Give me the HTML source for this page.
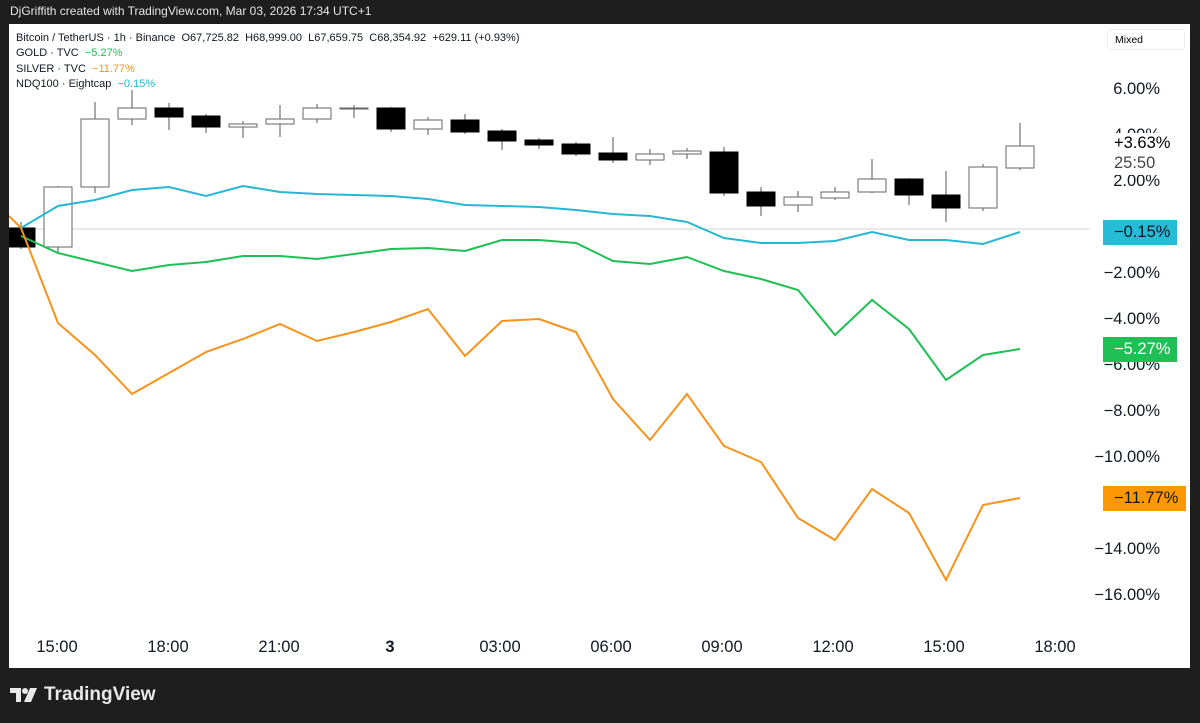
<!DOCTYPE html>
<html><head><meta charset="utf-8"><style>
html,body{margin:0;padding:0;background:#1e1e1e;width:1200px;height:723px;overflow:hidden;font-family:"Liberation Sans","DejaVu Sans",sans-serif}
#top{position:absolute;left:10px;top:4px;color:#e6e6e6;font-size:12px}
#panel{position:absolute;left:9px;top:24px;width:1181px;height:644px;background:#fff}
.leg{position:absolute;left:7px;font-size:11px;color:#131722;white-space:nowrap}
.ax{position:absolute;right:30px;font-size:16.5px;color:#131722;text-align:right}
.tl{position:absolute;top:614px;font-size:16.5px;color:#131722;transform:translateX(-50%)}
.badge{position:absolute;left:1094px;height:25px;font-size:16.5px;line-height:25px;padding:0 0 0 11px;box-sizing:border-box}
</style></head><body>
<div id="top">DjGriffith created with TradingView.com, Mar 03, 2026 17:34 UTC+1</div>
<div id="panel">
<svg width="1181" height="644" style="position:absolute;left:0;top:0" viewBox="9 24 1181 644">
<line x1="9" y1="229" x2="1090" y2="229" stroke="#d6d6d6" stroke-width="1"/>
<g id="candles"></g>
<polyline fill="none" stroke="#26b8d3" stroke-width="2" points="21,228 58,206 95,200 132,190 169,187 206,196 243,186 280,192 317,194 354,195 391,196 428,199 465,205 502,206 539,207 576,210 613,214 650,216 687,222 724,238 761,243 798,243 835,241 872,232 909,240 946,240 983,244 1020,232"/>
<polyline fill="none" stroke="#1fbf55" stroke-width="2" points="21,236 58,253 95,262 132,271 169,265 206,262 243,256 280,256 317,259 354,254 391,249 428,248 465,251 502,240 539,240 576,243 613,261 650,264 687,257 724,271 761,279 798,290 835,335 872,300 909,329 946,380 983,355 1020,349"/>
<polyline fill="none" stroke="#f7931a" stroke-width="2" points="9,216 21,228 58,323 95,355 132,394 169,373 206,352 243,339 280,324 317,341 354,332 391,322 428,309 465,356 502,321 539,319 576,332 613,399 650,440 687,394 724,446 761,462 798,518 835,540 872,489 909,513 946,580 983,505 1020,498"/>
</svg>
<div class="leg" style="top:8px">Bitcoin / TetherUS · 1h · Binance &nbsp;O67,725.82 &nbsp;H68,999.00 &nbsp;L67,659.75 &nbsp;C68,354.92 &nbsp;+629.11 (+0.93%)</div>
<div class="leg" style="top:23px">GOLD · TVC &nbsp;<span style="color:#1fbf55">−5.27%</span></div>
<div class="leg" style="top:39px">SILVER · TVC &nbsp;<span style="color:#f7931a">−11.77%</span></div>
<div class="leg" style="top:54px">NDQ100 · Eightcap &nbsp;<span style="color:#26b8d3">−0.15%</span></div>
<div style="position:absolute;left:1098px;top:5px;width:78px;height:21px;border:1px solid #eee;border-radius:3px;font-size:10.5px;line-height:21px;padding-left:7px;box-sizing:border-box">Mixed</div>
<div class="ax" style="top:56px">6.00%</div>
<div class="ax" style="top:102px;clip-path:inset(0 0 60% 0)">4.00%</div>
<div class="ax" style="top:148px">2.00%</div>
<div class="ax" style="top:240px">−2.00%</div>
<div class="ax" style="top:286px">−4.00%</div>
<div class="ax" style="top:332px">−6.00%</div>
<div class="ax" style="top:378px">−8.00%</div>
<div class="ax" style="top:424px">−10.00%</div>
<div class="ax" style="top:516px">−14.00%</div>
<div class="ax" style="top:562px">−16.00%</div>
<div style="position:absolute;left:1100px;top:109px;width:60px;height:42px;background:#fff;font-size:16.5px;line-height:20px;padding-left:5px">+3.63%<br><span style="color:#444">25:50</span></div>
<div class="badge" style="top:196px;background:#26bcd6;color:#131722;width:74px">−0.15%</div>
<div class="badge" style="top:313px;background:#1fbf55;color:#fff;width:74px">−5.27%</div>
<div class="badge" style="top:462px;background:#ff9800;color:#131722;width:83px">−11.77%</div>
<div class="tl" style="left:48px">15:00</div>
<div class="tl" style="left:159px">18:00</div>
<div class="tl" style="left:270px">21:00</div>
<div class="tl" style="left:381px;font-weight:bold">3</div>
<div class="tl" style="left:491px">03:00</div>
<div class="tl" style="left:602px">06:00</div>
<div class="tl" style="left:713px">09:00</div>
<div class="tl" style="left:824px">12:00</div>
<div class="tl" style="left:935px">15:00</div>
<div class="tl" style="left:1046px">18:00</div>
</div>
<div style="position:absolute;left:10px;top:684px;color:#e8e8e8;font-size:19px;font-weight:bold;display:flex;align-items:center">
<svg width="28" height="16" viewBox="0 0 28 16" style="margin-right:6px"><path d="M0 1h11v14H6V6H0z" fill="#e8e8e8"/><circle cx="15" cy="4" r="3" fill="#e8e8e8"/><path d="M20 1h7l-6 14h-7z" fill="#e8e8e8"/></svg>TradingView</div>
<script>
var d=[[1,228,247,222,249],[0,187,247,186,253],[0,119,187,102,193],[0,108,119,90,125],[1,108,117,103,130],[1,116,127,114,133],[0,124,127,121,138],[0,119,124,105,137],[0,108,119,104,123],[0,108,109,105,118],[1,108,129,107,132],[0,120,129,117,135],[1,120,132,114,134],[1,131,141,129,150],[1,140,145,138,149],[1,144,154,142,156],[1,153,160,137,163],[0,154,160,149,165],[0,151,154,148,159],[1,152,193,147,196],[1,192,206,187,216],[0,197,205,191,212],[0,192,198,187,200],[0,179,192,159,193],[1,179,195,178,205],[1,195,208,171,222],[0,167,208,164,211],[0,146,168,123,170]];
var s='';d.forEach(function(c,i){var x=21+37*i;s+='<line x1="'+x+'" x2="'+x+'" y1="'+c[3]+'" y2="'+c[4]+'" stroke="#555" stroke-width="1"/>';var h=Math.max(1,c[2]-c[1]);s+='<rect x="'+(x-14)+'" y="'+c[1]+'" width="28" height="'+h+'" fill="'+(c[0]?'#000':'#fff')+'" stroke="'+(c[0]?'#000':'#666')+'" stroke-width="1"/>';});
document.getElementById('candles').innerHTML=s;
</script>
</body></html>
